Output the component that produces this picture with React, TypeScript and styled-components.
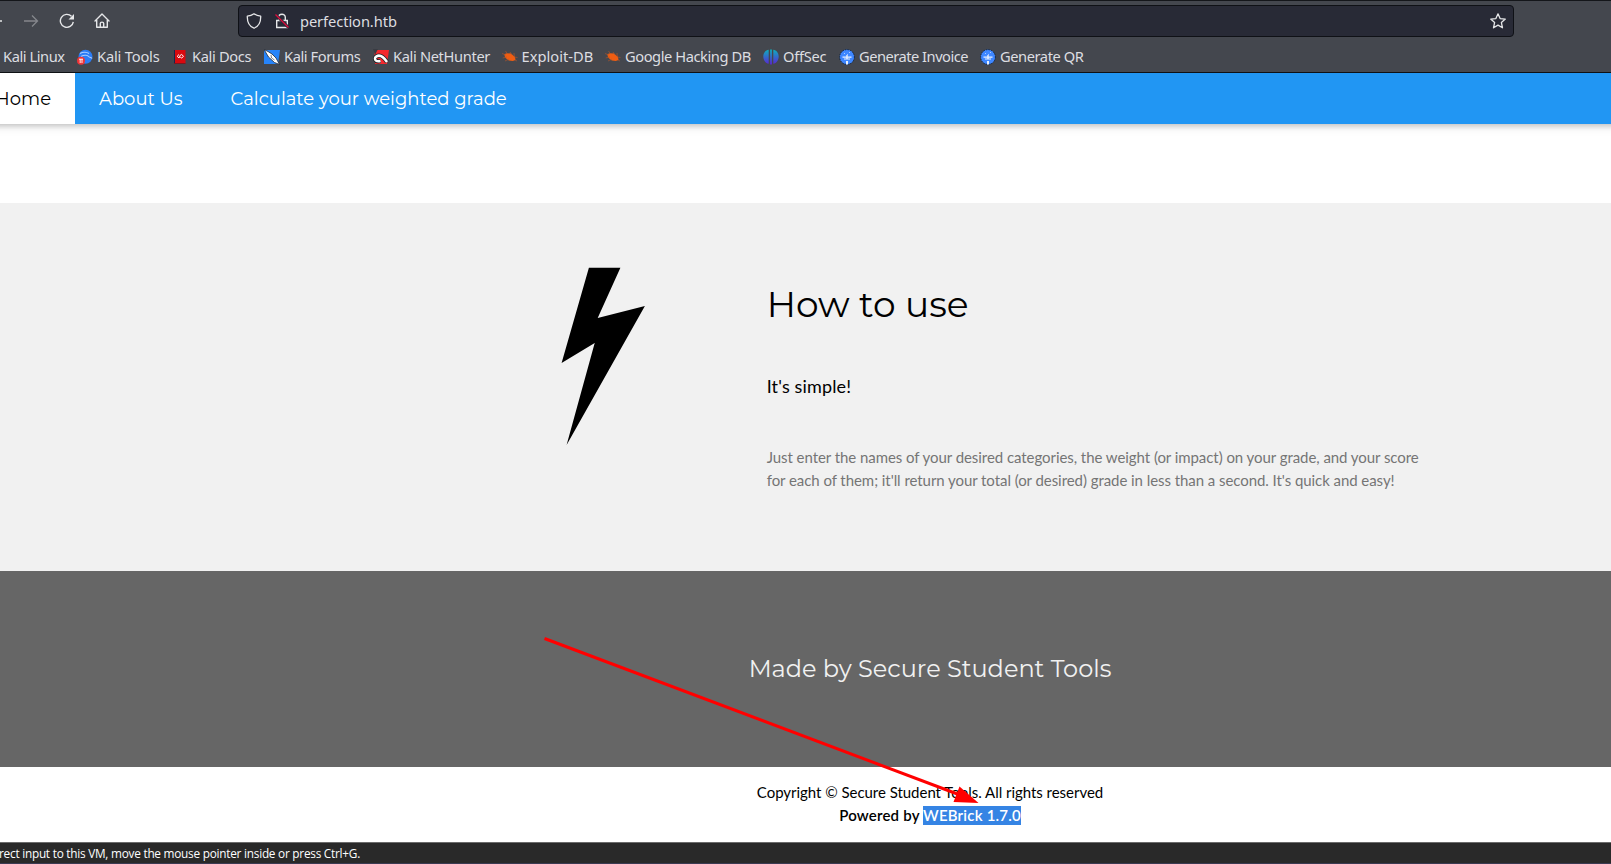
import React from "react";
import styled, { createGlobalStyle } from "styled-components";

const Global = createGlobalStyle`
  *, *::before, *::after { box-sizing: border-box; }
  html, body { margin: 0; padding: 0; overflow: hidden; }
  h1, h2, h5, p { margin: 0; font-weight: 400; }
`;

const ui = `"Noto Sans", "Open Sans", sans-serif`;
const heading = `Montserrat, Inter, sans-serif`;

const Page = styled.div`
  position: relative;
  display: flex;
  flex-direction: column;
  width: 1611px;
  height: 864px;
  overflow: hidden;
  background: #fff;
  color: #000;
  font: 400 15px/1.5 Lato, sans-serif;
`;

const Chrome = styled.header`
  position: relative;
  z-index: 2;
  flex: none;
  height: 73px;
  background: #44474e;
  border-top: 1px solid #14161a;
  border-bottom: 1px solid #0f1114;
  color: #dddee1;
  font-family: ${ui};
`;

const Toolbar = styled.div`
  display: flex;
  align-items: center;
  height: 40px;
`;

const ToolButtons = styled.div`
  display: flex;
  align-items: center;
  width: 238px;
  flex: none;
  svg { flex: none; }
`;

const BackTip = styled.svg` margin-right: 21px; `;
const Forward = styled.svg` margin-right: 20px; `;
const Reload = styled.svg` margin-right: 19px; `;

const AddressBar = styled.div`
  display: flex;
  align-items: center;
  width: 1276px;
  height: 32px;
  padding: 0 7px;
  border: 1px solid #0f1116;
  border-radius: 4px;
  background: #282a36;
`;

const Shield = styled.svg` margin-right: 12px; `;

const Url = styled.span`
  flex: 1;
  margin-left: 10px;
  font-size: 14.67px;
  letter-spacing: -0.08px;
  line-height: 20px;
`;

const Bookmarks = styled.nav`
  display: flex;
  align-items: center;
  height: 31px;
  padding-left: 3px;
`;

const Bookmark = styled.a<{ $width: number; $tracking?: number }>`
  display: flex;
  align-items: center;
  flex: none;
  gap: 4px;
  width: ${(p) => p.$width}px;
  font-size: 14.67px;
  letter-spacing: ${(p) => p.$tracking ?? -0.43}px;
  line-height: 20px;
  white-space: nowrap;
  svg { flex: none; }
`;

const BookmarkLabel = styled.span` padding-bottom: 2px; `;

const Nav = styled.nav`
  position: relative;
  z-index: 1;
  display: flex;
  flex: none;
  height: 51px;
  margin: 0 -20px;
  padding: 0 20px;
  background: linear-gradient(90deg, #fff 20px, #2196f3 20px);
  box-shadow: 0 2px 5px rgba(0, 0, 0, 0.16), 0 2px 10px rgba(0, 0, 0, 0.12);
`;

const NavLink = styled.a<{ $active?: boolean }>`
  display: flex;
  justify-content: flex-end;
  width: ${(p) => (p.$active ? "75px" : "auto")};
  padding: 13px 24px 11px;
  background: ${(p) => (p.$active ? "#fff" : "transparent")};
  color: ${(p) => (p.$active ? "#000" : "#fff")};
  font: 400 18px/27px ${heading};
  white-space: nowrap;
`;

const Gap = styled.div` flex: none; height: 79px; `;

const HowTo = styled.section`
  display: flex;
  flex: none;
  height: 368px;
  padding: 64px 190px 64px 440px;
  background: #f1f1f1;
`;

const IconColumn = styled.div`
  display: flex;
  justify-content: center;
  width: 326.7px;
  flex: none;
`;

const Copy = styled.div` width: 653.3px; flex: none; `;
const Title = styled.h1` margin: 10px 0; font: 400 36px/54px ${heading}; `;
const Lead = styled.h5` padding: 32px 0; font-size: 18px; line-height: 27px; letter-spacing: 0.15px; `;
const Body = styled.p`
  margin-top: 14px;
  color: #757575;
  line-height: 22.5px;
  letter-spacing: -0.06px;
  white-space: nowrap;
`;

const Banner = styled.section`
  display: flex;
  flex: none;
  align-items: center;
  justify-content: center;
  height: 196px;
  padding-left: 249px;
  background: #666;
  color: #f1f1f1;
`;
const BannerTitle = styled.h2` font: 400 24px/36px ${heading}; `;

const Footer = styled.footer`
  flex: none;
  height: 75px;
  padding: 14px 0 0 249px;
  text-align: center;
  line-height: 22.5px;
`;
const Copyright = styled.p` letter-spacing: -0.03px; `;
const Powered = styled.p` font-weight: 600; letter-spacing: 0.2px; `;
const Selected = styled.span` padding-bottom: 1px; background: #3584e4; color: #fff; `;

const StatusBar = styled.div`
  flex: none;
  height: 22px;
  border-top: 1px solid #6b6b6b;
  border-bottom: 1px solid #3b3a52;
  background: #292929;
  color: #fff;
  font: 400 11.8px/21px "Open Sans", "Noto Sans", sans-serif;
  letter-spacing: -0.24px;
  white-space: nowrap;
  text-indent: -1px;
`;

const Arrow = styled.svg` position: absolute; left: 540px; top: 630px; z-index: 2; `;

const ToolsIcon = () => (
  <svg width="16" height="16" viewBox="0 0 16 16">
    <circle cx="8.5" cy="7.7" r="7" fill="#2b7cf6" />
    <path d="M3 4.5C6 2.5 10 3 12 4.5M4 7.5c3-2 7-1.5 7.5 0 .8 1 2.5.5 3.5 2" fill="none" stroke="#a9cdff" strokeWidth="1.1" />
    <circle cx="4" cy="11.7" r="4" fill="#ee3438" />
    <path d="M2 10.2h4M3.2 10v4M5 10v4" stroke="#fff" strokeWidth=".9" />
  </svg>
);
const DocsIcon = () => (
  <svg width="16" height="16" viewBox="0 0 16 16">
    <path d="M2 1h2v14H2z" fill="#18264c" />
    <path d="M3 1H13.5v13.5H3z" fill="#d9090f" />
    <path d="M2 14.5h11.5" stroke="#7b1720" />
    <path d="M7 5.5 5.2 7.3 7 9l1.3-2.8L9.700 5.500 11.500 7.300 9.700 9 8.300 8.300" fill="none" stroke="#fff" strokeWidth="1" />
  </svg>
);
const ForumsIcon = () => (
  <svg width="16" height="16" viewBox="0 0 16 16">
    <path d="M0 1h16l-2 14H0z" fill="#2684fa" />
    <path d="m0 .5 4 2L8 5l4 4 3.500 6.500-5-2L4.500 8z" fill="#fff" stroke="#202735" strokeWidth=".8" />
    <path d="m7 6 .5 3 3 2" fill="none" stroke="#1d2a42" strokeWidth=".6" />
  </svg>
);
const HunterIcon = () => (
  <svg width="16" height="16" viewBox="0 0 16 16">
    <path d="M1 1h15l-2 14H2z" fill="#f4282d" />
    <path d="M0 0h5L2 6z" fill="#393c43" />
    <path d="M7.500 12C2 13.500.5 9 3.500 7.300S10 7 14 13" fill="none" stroke="#202329" strokeWidth="4.200" />
    <path d="M7.500 12C2 13.500.5 9 3.500 7.300S10 7 14 13" fill="none" stroke="#fff" strokeWidth="2.500" />
  </svg>
);
const BugIcon = () => (
  <svg width="16" height="16" viewBox="0 0 16 16">
    <path d="m2.500 5 2.500-.8 4 .3 2.200 2 1.800 1.500.5 3-2.700 1-4-.6-3.200-2.400L2.600 7z" fill="#ef5d12" />
    <path d="M0 4.500 4 6M3.500 2l2 3M8 3l2 3M12 4l.3 4M.7 9 5 8M3 12l4-2M12 8l3.500.5M13 11l2 1" stroke="#b85626" strokeWidth=".6" />
  </svg>
);
const OffSecIcon = () => (
  <svg width="16" height="16" viewBox="0 0 16 16">
    <defs>
      <linearGradient id="os" x1="0" y1="0" x2="0" y2="1">
        <stop offset="0" stopColor="#0cb0bd" />
        <stop offset="1" stopColor="#5a24d6" />
      </linearGradient>
    </defs>
    <path d="M5.700.8v13.900C2.500 14.300.3 11 .3 7.500S2.500 1.200 5.700.8ZM10.300.8v13.900c3.200-.4 5.400-3.700 5.400-7.200S13.500 1.200 10.300.8ZM7.100.5h1.800v15H7.100z" fill="url(#os)" />
  </svg>
);
const GenerateIcon = () => (
  <svg width="16" height="16" viewBox="0 0 16 16">
    <circle cx="8" cy="8" r="7.400" fill="#3f87ff" stroke="#10233f" strokeWidth="1" strokeDasharray="1.500 1" />
    <path d="M3.500 7.500h9v1.300h-9zM5 9.500h6v1H5zM7.300 6h1.400v4.500H7.300zM7 12h2v3.500H7z" fill="#e9f1ff" />
    <path d="M5 4h1v1H5zM10 3h1v1h-1zM8 5h1v1H8z" fill="#a9cbff" />
  </svg>
);

const bookmarks = [
  { label: "Kali Tools", width: 95, tracking: -0.18, Icon: ToolsIcon },
  { label: "Kali Docs", width: 92, tracking: -0.35, Icon: DocsIcon },
  { label: "Kali Forums", width: 109, Icon: ForumsIcon },
  { label: "Kali NetHunter", width: 128.5, tracking: -0.35, Icon: HunterIcon },
  { label: "Exploit-DB", width: 103.5, tracking: 0.02, Icon: BugIcon },
  { label: "Google Hacking DB", width: 158, Icon: BugIcon },
  { label: "OffSec", width: 76, tracking: -0.25, Icon: OffSecIcon },
  { label: "Generate Invoice", width: 141, tracking: -0.5, Icon: GenerateIcon },
  { label: "Generate QR", width: 110, Icon: GenerateIcon },
];

export default function App() {
  return (
    <Page>
      <Global />
      <Chrome>
        <Toolbar>
          <ToolButtons>
            <BackTip width="2" height="16"><path d="M0 8h2" stroke="#e6e7e9" strokeWidth="1.3" /></BackTip>
            <Forward width="16" height="16" viewBox="0 0 16 16" fill="none" stroke="#85878c" strokeWidth="1.3">
              <path d="M1 8h13.5M9 2.5 14.5 8 9 13.5" />
            </Forward>
            <Reload width="16" height="16" viewBox="0 0 16 16" fill="none" stroke="#e6e7e9" strokeWidth="1.4">
              <path d="M14.3 8.8A6.5 6.5 0 1 1 12.5 3.3" />
              <path d="M15 1v5.5H9.5z" fill="#e6e7e9" stroke="none" />
            </Reload>
            <svg width="16" height="16" viewBox="0 0 16 16" fill="none" stroke="#e6e7e9" strokeWidth="1.4" strokeLinejoin="round" strokeLinecap="round">
              <path d="M1 8 8 1l7 7M2.7 7v7.3h10.6V7M6.3 14V10.6c0-2 3.4-2 3.4 0V14" />
            </svg>
          </ToolButtons>
          <AddressBar>
            <Shield width="16" height="16" viewBox="0 0 16 16" fill="none" stroke="#e6e7e9" strokeWidth="1.3" strokeLinejoin="round">
              <path d="M8 .8c2 1.5 4.3 2.2 6.7 2.4.2 6-1.7 10-6.7 12-5-2-6.9-6-6.7-12C3.7 3 6 2.3 8 .8Z" />
            </Shield>
            <svg width="16" height="16" viewBox="0 0 16 16" fill="none" stroke="#e6e7e9" strokeWidth="1.4">
              <path d="M4.700 7.500V4.200c0-4 6.600-4 6.600 0v3.300M2.700 7.500h10.600v7H2.700z" />
              <path d="M1.500 1.500 14.500 14.500" stroke="#282a36" strokeWidth="3" />
              <path d="M1.500 1.500 14.500 14.500" stroke="#e20a3b" strokeWidth="1.3" />
            </svg>
            <Url>perfection.htb</Url>
            <svg width="16" height="16" viewBox="0 0 16 16" fill="none" stroke="#e6e7e9" strokeWidth="1.3" strokeLinejoin="round">
              <path d="m8 .8 2.100 4.800 5.200.5-3.900 3.500 1.100 5.200L8 12.100l-4.500 2.700 1.100-5.200L.7 6.100l5.200-.5z" />
            </svg>
          </AddressBar>
        </Toolbar>
        <Bookmarks>
          <Bookmark $width={74}>
            <BookmarkLabel>Kali Linux</BookmarkLabel>
          </Bookmark>
          {bookmarks.map(({ label, width, tracking, Icon }) => (
            <Bookmark key={label} $width={width} $tracking={tracking}>
              <Icon />
              <BookmarkLabel>{label}</BookmarkLabel>
            </Bookmark>
          ))}
        </Bookmarks>
      </Chrome>
      <Nav>
        <NavLink $active>Home</NavLink>
        <NavLink>About Us</NavLink>
        <NavLink>Calculate your weighted grade</NavLink>
      </Nav>
      <Gap />
      <HowTo>
        <IconColumn>
          <svg width="84" height="180" viewBox="0 0 84 180">
            <path d="M27.900.8H59.400L36.700 51l47.200-12L5.600 178 33.700 76 .6 96z" />
          </svg>
        </IconColumn>
        <Copy>
          <Title>How to use</Title>
          <Lead>It's simple!</Lead>
          <Body>
            Just enter the names of your desired categories, the weight (or impact) on your grade, and your score
            <br />
            for each of them; it'll return your total (or desired) grade in less than a second. It's quick and easy!
          </Body>
        </Copy>
      </HowTo>
      <Banner>
        <BannerTitle>Made by Secure Student Tools</BannerTitle>
      </Banner>
      <Footer>
        <Copyright>Copyright © Secure Student Tools. All rights reserved</Copyright>
        <Powered>
          Powered by <Selected>WEBrick 1.7.0</Selected>
        </Powered>
      </Footer>
      <StatusBar>rect input to this VM, move the mouse pointer inside or press Ctrl+G.</StatusBar>
      <Arrow width="445" height="180">
        <path d="M4.500 8.500 420 165" stroke="#f00" strokeWidth="3" />
        <path d="m438.500 173-19-16.500-6 15.500z" fill="#f00" />
      </Arrow>
    </Page>
  );
}
